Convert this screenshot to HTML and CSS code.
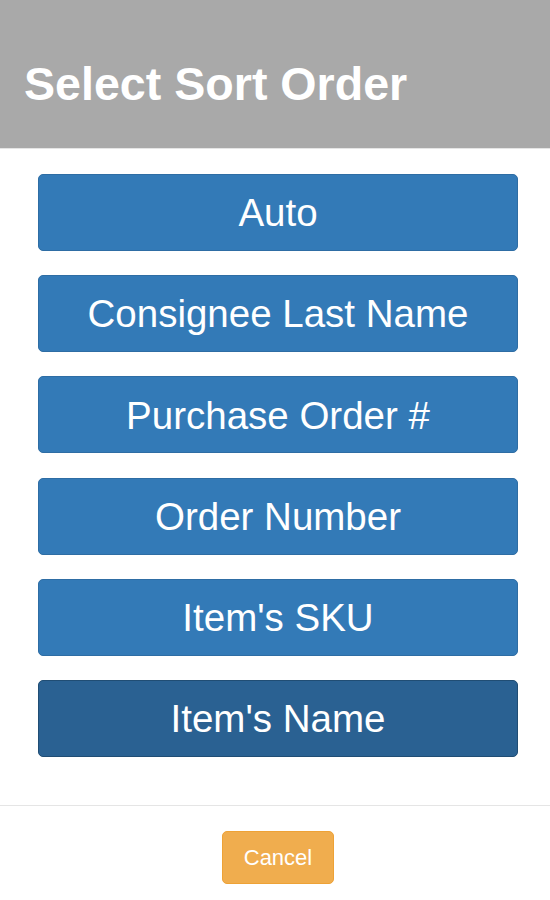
FILE: index.html
```html
<!DOCTYPE html>
<html>
<head>
<meta charset="utf-8">
<link rel="stylesheet" href="styles.css">
</head>
<body>
<div class="dialog">
  <div class="header"><h1 class="title">Select Sort Order</h1></div>
  <div class="options">
    <button class="opt">Auto</button>
    <button class="opt">Consignee Last Name</button>
    <button class="opt">Purchase Order #</button>
    <button class="opt">Order Number</button>
    <button class="opt">Item's SKU</button>
    <button class="opt active">Item's Name</button>
  </div>
  <div class="footer">
    <button class="cancel">Cancel</button>
  </div>
</div>
</body>
</html>
```
FILE: styles.css
```css
html, body { margin: 0; padding: 0; background: #fff; }
body { font-family: "Liberation Sans", Arial, sans-serif; width: 550px; height: 900px; overflow: hidden; }
.dialog { display: flex; flex-direction: column; }
.header {
  box-sizing: border-box;
  height: 149px;
  background: #a9a9a9;
  border-bottom: 1px solid #e5e5e5;
  padding: 59px 24px 0;
}
.title { margin: 0; color: #fff; font-size: 46.6px; line-height: 50px; font-weight: bold; }
.options {
  display: flex; flex-direction: column; gap: 24.2px;
  padding: 25px 0 48px 38px;
}
.opt {
  box-sizing: border-box;
  width: 480px; height: 77px;
  background: #337ab7; border: 1px solid #2e6da4; border-radius: 5px;
  color: #fff; font-family: inherit; font-size: 38.5px; line-height: 1;
  display: flex; align-items: center; justify-content: center;
  padding: 2px 0 0; margin: 0;
}
.opt.active { background: #2a6192; border-color: #204d74; }
.footer {
  border-top: 1px solid #e5e5e5;
  display: flex; justify-content: center;
  padding: 25px 0 0 6px;
}
.cancel {
  box-sizing: border-box;
  width: 112px; height: 53px;
  background: #f0ad4e; border: 1px solid #eea236; border-radius: 5px;
  color: #fff; font-family: inherit; font-size: 22px; padding: 2px 0 0; margin: 0;
}
```
